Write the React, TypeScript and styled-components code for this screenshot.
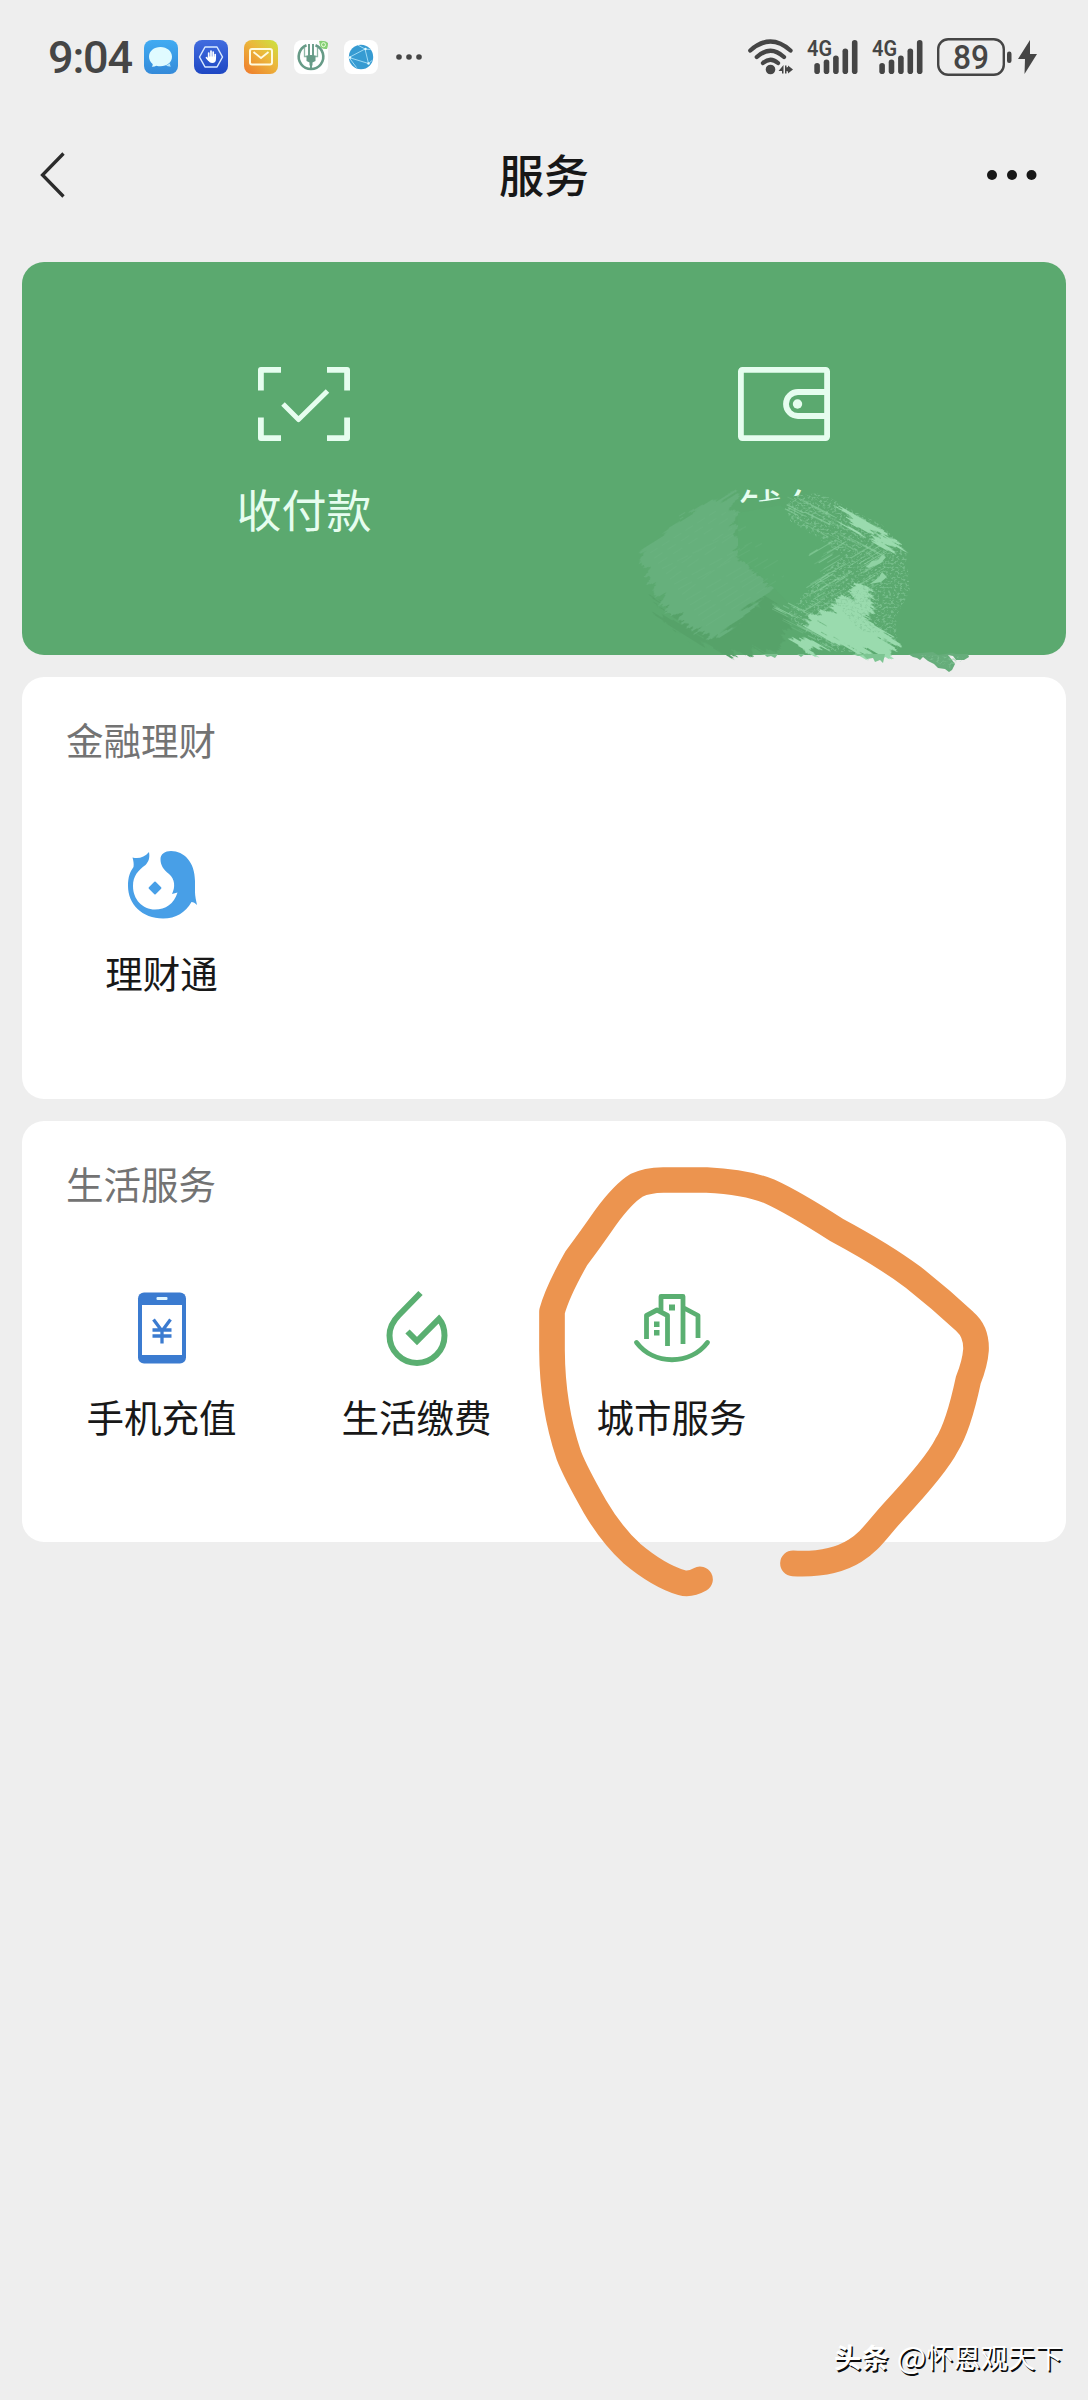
import React from 'react';
import styled, { createGlobalStyle } from 'styled-components';

const GlobalStyle = createGlobalStyle`
  * { box-sizing: border-box; }
  body {
    margin: 0;
    background: #eeeeee;
    font-family: "Noto Sans CJK SC", "Liberation Sans", sans-serif;
  }
  svg { display: block; overflow: visible; flex: none; }
`;

const Page = styled.main`
  position: relative;
  display: flex;
  flex-direction: column;
  width: 1088px;
  height: 2400px;
  overflow: hidden;
  background: #eeeeee;
`;

const StatusBar = styled.header`
  display: flex;
  align-items: center;
  justify-content: space-between;
  height: 114px;
  padding: 0 51px 0 48px;
`;

const StatusGroup = styled.div<{ $gap: number }>`
  display: flex;
  align-items: center;
  gap: ${(p) => p.$gap}px;
`;

const Clock = styled.time`
  width: 80px;
  padding-top: 2px;
  color: #454545;
  font: 500 45px/54px Roboto, sans-serif;
  letter-spacing: -1.2px;
  white-space: nowrap;
`;

const NavBar = styled.nav`
  display: grid;
  grid-template-columns: 120px 1fr 120px;
  align-items: center;
  height: 122px;
  padding: 0 40px;
`;

const NavTitle = styled.h1`
  margin: 0;
  padding-bottom: 3px;
  color: #171717;
  font-size: 45px;
  font-weight: 500;
  line-height: 60px;
  text-align: center;
`;

const NavAction = styled.button<{ $end?: boolean }>`
  display: flex;
  justify-content: ${(p) => (p.$end ? 'flex-end' : 'flex-start')};
  padding: 0;
  border: 0;
  background: none;
`;

const Content = styled.div`
  display: flex;
  flex-direction: column;
  gap: 22px;
  padding: 26px 22px 0;
`;

const PayCard = styled.section`
  position: relative;
  display: grid;
  grid-template-columns: 480px 480px;
  justify-content: center;
  height: 393px;
  padding-top: 105px;
  border-radius: 22px;
  background: #5ba96f;
`;

const PayItem = styled.div`
  display: flex;
  flex-direction: column;
  align-items: center;
  gap: 38px;
`;

const PayLabel = styled.span<{ $worn?: boolean }>`
  color: #e6fdef;
  font-size: 45px;
  line-height: 60px;
  clip-path: ${(p) => (p.$worn ? 'polygon(0 0, 100% 0, 92% 14px, 62% 17px, 50% 19px, 30% 22px, 0 24px)' : 'none')};
`;

const Smear = styled.svg`
  position: absolute;
  left: 598px;
  top: 229px;
  pointer-events: none;
`;

const Card = styled.section`
  height: 421.5px;
  padding: 35px 12px 0;
  border-radius: 22px;
  background: #ffffff;
`;

const CardTitle = styled.h2`
  margin: 0 0 0 32px;
  color: #737373;
  font-size: 37.5px;
  font-weight: 400;
  line-height: 54px;
`;

const ServiceGrid = styled.div`
  display: grid;
  grid-template-columns: repeat(4, 255px);
  margin-top: 80px;
`;

const Service = styled.div`
  display: flex;
  flex-direction: column;
  align-items: center;
  gap: 23px;
`;

const ServiceLabel = styled.span`
  color: #181818;
  font-size: 37.5px;
  line-height: 54px;
`;

const Marker = styled.svg`
  position: absolute;
  left: 530px;
  top: 1150px;
  pointer-events: none;
`;

const Watermark = styled.footer`
  display: flex;
  align-items: center;
  justify-content: flex-end;
  gap: 8px;
  margin-top: auto;
  height: 88px;
  padding: 0 25.5px 0 0;
  color: #ffffff;
  font-size: 27.3px;
  line-height: 40px;
  text-shadow: 1.5px 1.5px 0 #0c0c0c;
`;

const Brand = styled.b`
  font-weight: 700;
`;

const Author = styled.span`
  display: flex;
  align-items: center;
`;

const AtSign = styled.span`
  font-size: 31px;
`;

const INK = '#454545';

const MessageApp = () => (
  <svg width="34" height="34" viewBox="0 0 34 34">
    <defs>
      <linearGradient id="msg" x1="0" y1="0" x2="0" y2="1">
        <stop offset="0" stopColor="#41abf2" /><stop offset="1" stopColor="#348ad9" />
      </linearGradient>
    </defs>
    <rect width="34" height="34" rx="8" fill="url(#msg)" />
    <path d="M16.500 7C10 7 5 11 5 16.800c0 3 1.400 5.300 3.600 7.200.3 1.200-.2 2-.8 2.700 1.800.1 3.300-.3 4.600-1 1.300.4 2.700.5 4.100.5C23 26.200 28 22.300 28 16.800S23 7 16.500 7z" fill="#e0fbff" />
    <path d="M22 25.500c1.500 1 3.200 1.300 5 1-1-.9-1.100-2-.8-3.200" fill="#b7e4fa" />
  </svg>
);

const GuardApp = () => (
  <svg width="34" height="34" viewBox="0 0 34 34">
    <defs>
      <linearGradient id="guard" x1="0" y1="0" x2="0" y2="1">
        <stop offset="0" stopColor="#416cdf" /><stop offset="1" stopColor="#1e47c3" />
      </linearGradient>
    </defs>
    <rect width="34" height="34" rx="8" fill="url(#guard)" />
    <path d="M11 7h12l5.500 10L23 27H11L5.500 17z" fill="none" stroke="#d9eaff" strokeWidth="1.500" strokeLinejoin="round" />
    <path d="M14.700 18v-5M17 17v-6M19.200 17v-5M21.200 18v-3.500M14.500 20l-2-2.300" stroke="#fff" strokeWidth="1.700" strokeLinecap="round" />
    <path d="M13.800 16.500h8.200v2.500c0 2.500-1.300 4-3.700 4-2.300 0-3.200-.9-4.500-3.200z" fill="#fff" />
  </svg>
);

const MailApp = () => (
  <svg width="34" height="34" viewBox="0 0 34 34">
    <defs>
      <linearGradient id="mail" x1="1" y1="0" x2="0.100" y2="1">
        <stop offset="0" stopColor="#c9e53f" /><stop offset=".45" stopColor="#ebb83b" /><stop offset="1" stopColor="#ef7e2d" />
      </linearGradient>
    </defs>
    <rect width="34" height="34" rx="8" fill="url(#mail)" />
    <rect x="6" y="9" width="22" height="15.500" rx="2" fill="none" stroke="#fffbe0" strokeWidth="2" />
    <path d="M9.500 12l7.500 6 7.500-6" fill="none" stroke="#fffbe0" strokeWidth="1.800" />
  </svg>
);

const BankApp = () => (
  <svg width="34" height="34" viewBox="0 0 34 34">
    <rect width="34" height="34" rx="8" fill="#fff" />
    <path d="M12.500 5.300a12.300 12.300 0 1 0 9 0" fill="none" stroke="#679b87" strokeWidth="2.600" />
    <path d="M15 4v12M19 4v12M17 15v13" fill="none" stroke="#679b87" strokeWidth="1.900" />
    <path d="M10.500 8v8.500h3.500M23.500 8v8.500H20" fill="none" stroke="#8fb8a7" strokeWidth="1.300" />
    <path d="M12.500 15.500h9v5.500l-3 1.500v3h-3v-3l-3-1.500z" fill="#679b87" />
    <path d="M25 1c4-.5 7 0 9 2 0 3-.5 5-1 6-4 .5-7-1-7-3.500z" fill="#86cf75" />
    <circle cx="29.500" cy="4.700" r="2" fill="none" stroke="#eaffdc" />
  </svg>
);

const NetApp = () => (
  <svg width="34" height="34" viewBox="0 0 34 34">
    <rect width="34" height="34" rx="8" fill="#fff" />
    <circle cx="17" cy="17" r="12.200" fill="#369bd2" />
    <path d="M5 17.500L21 9l3.500 14.500zM14 5.200l7 3.800 5.500.5M24.500 23.500l3.500-3M5 17.500l7.500 10" fill="none" stroke="#a9e0f7" strokeWidth=".9" />
    <g fill="#e4fbff"><circle cx="21.500" cy="9" r="1.200" /><circle cx="24.500" cy="23.500" r="1.200" /><circle cx="6" cy="17.500" r="1.200" /></g>
  </svg>
);

const WifiIcon = () => (
  <svg width="45" height="36" viewBox="0 0 45 36" fill="none" stroke={INK} strokeWidth="4.300" strokeLinecap="round">
    <path d="M2.300 11.500Q22.500-6.500 42.500 11.500" />
    <path d="M8.800 18Q22.500 5.500 36 18" />
    <path d="M15 24Q22.500 17.500 30 24" />
    <circle cx="22.500" cy="30.500" r="4.800" fill={INK} stroke="none" />
    <path d="M30.500 32l5-6v8.500h-1.500V32zM37 26.500h1.500v2l1.500-.5v-1.500l5 4-5 4v-2l-1.500-.5v2.500H37z" fill={INK} stroke="none" />
  </svg>
);

const SignalIcon = () => (
  <svg width="51" height="36" viewBox="0 0 51 36">
    <text x="0" y="17.300" fill={INK} textLength="25" lengthAdjust="spacingAndGlyphs" fontFamily="Roboto" fontWeight="600" fontSize="22.500">4G</text>
    {[24, 20.5, 16.5, 9.5, 1].map((top, i) => (
      <rect key={top} x={7.3 + i * 9.4} y={top} width="5.600" height={35 - top} rx="2.800" fill={INK} />
    ))}
  </svg>
);

const Power = styled.div`
  display: flex;
  align-items: center;
  gap: 6px;
`;

const BatteryIcon = () => (
  <svg width="75" height="38" viewBox="0 0 75 38">
    <rect x="1.200" y="1.200" width="65.600" height="35.600" rx="10" fill="none" stroke={INK} strokeWidth="2.400" />
    <text x="34" y="31" textAnchor="middle" fill={INK} textLength="36" lengthAdjust="spacingAndGlyphs" fontFamily="Roboto" fontWeight="500" fontSize="33.500">89</text>
    <rect x="70" y="13.500" width="4.500" height="11.500" rx="2.200" fill={INK} />
  </svg>
);

const BoltIcon = () => (
  <svg width="19" height="36" viewBox="0 0 19 36">
    <path d="M12 1L0 20h7l-.5 15L19 15h-7z" fill={INK} />
  </svg>
);

const ScanIcon = () => (
  <svg width="92" height="74" viewBox="0 0 92 74" fill="none" stroke="#e6fdef" strokeWidth="5.800" strokeLinejoin="round">
    <path d="M2.900 23.500V2.900H23M69 2.900h20.100v20.600M89.100 50.500v20.600H69M23 71.100H2.900V50.500" />
    <path d="M25 37l15.500 15.500L69.500 24" strokeWidth="5" />
  </svg>
);

const WalletIcon = () => (
  <svg width="92" height="74" viewBox="0 0 92 74" fill="none" stroke="#e6fdef" strokeWidth="5.800">
    <rect x="2.900" y="2.900" width="86.200" height="68.200" rx="1.500" />
    <path d="M89 25H60a12 12 0 0 0 0 24h29" />
    <circle cx="59.500" cy="37" r="4.700" fill="#e6fdef" stroke="none" />
  </svg>
);

const DolphinIcon = () => (
  <svg width="70" height="72" viewBox="0 0 70 72" fill="#489fe7">
    <path d="M5.500 9.500c6 1.500 12 0 16.500-5.500 1 6-.3 9.500-3.500 13C11 22.500 6 28 6 38c0 13.500 9.500 23.500 22 23.500 10.500 0 19-5.500 22.500-17l-5.500 1.500c3.500-7 3-15-3-20-6-5-8.500-9-8.500-15C33.500 6 38 3 44 3c13 0 24 11 24 30v11c0 4 1 8 2 13-2-2-3.500-3-5.500-3C58.500 64.500 49 70.500 36 70.500 15 70.500 1 56 1 38c0-9 2-14 5.500-19 .5-3 0-6-1-9.500z" />
    <path d="M28 34.500l5.500 5.500-5.500 5.500-5.500-5.500z" stroke="#489fe7" strokeWidth="1.800" strokeLinejoin="round" />
  </svg>
);

const PhoneIcon = () => (
  <svg width="48" height="72" viewBox="0 0 48 72">
    <rect y=".5" width="48" height="71" rx="6" fill="#3b7bd0" />
    <rect x="4" y="13" width="40" height="50" fill="#fff" />
    <rect x="18.500" y="5" width="11" height="3" rx="1" fill="#e1f6ff" />
    <path d="M15.500 27.500L24 39l8.500-11.500M14.500 38h19M14.500 44h19M24 38v13.500" fill="none" stroke="#3b7bd0" strokeWidth="3.300" />
  </svg>
);

const DropIcon = () => (
  <svg width="62" height="76" viewBox="0 0 62 76" fill="none" stroke="#5aaf71" strokeWidth="6">
    <path d="M34.500 3L13 25C6 32 3.500 38 3.500 45.500a27.500 27.500 0 0 0 55 0c0-7-2-12.500-5.500-16.500L31 51 21.500 41.500" />
  </svg>
);

const CityIcon = () => (
  <svg width="76" height="72" viewBox="0 0 76 72" fill="none" stroke="#5aaf71" strokeWidth="4.800" strokeLinejoin="round">
    <path d="M12.500 47V23.500L23 18l10.500 5.500V54M27 19V4.500h22V52M49 15.500l15 8V46" />
    <path d="M2.500 50.500C20 73.500 56 73.500 73.500 50.500" strokeLinecap="round" />
    <g fill="#5aaf71" stroke="none">
      <rect x="35" y="12.500" width="6" height="6" /><rect x="20" y="29.500" width="5.500" height="5.500" /><rect x="20" y="38" width="5.500" height="5.500" />
    </g>
  </svg>
);

type Line = { d: string; w: number; o: number };

/* Short parallel scratches scattered inside a slanted band. */
function scratches(count: number, seed: number, x0: number, y0: number, w: number, h: number, slope: number, skew: number): Line[] {
  let s = seed;
  const rnd = () => {
    s = (s * 16807) % 2147483647;
    return s / 2147483647;
  };
  return Array.from({ length: count }, () => {
    const v = rnd();
    const x = x0 + rnd() * w + v * skew;
    const y = y0 + v * h;
    const len = 6 + rnd() * 20;
    return { d: `M${x.toFixed(1)} ${y.toFixed(1)}l${len.toFixed(1)} ${(len * slope).toFixed(1)}`, w: 0.5 + rnd() * 0.9, o: 0.2 + rnd() * 0.45 };
  });
}

const rightScratches = scratches(75, 71, 185, 62, 65, 66, -0.6, -5);
const topScratches = scratches(30, 19, 150, 6, 35, 50, 0.5, 60);
const lowScratches = scratches(34, 43, 145, 112, 35, 42, 0.5, 40);

/* Frays the edges of a shape along the direction of the brush. */
const Frayed = ({ angle, children }: { angle: number; children: React.ReactNode }) => (
  <g transform={`rotate(${angle} 185 85)`}>
    <g filter="url(#rough)">
      <g transform={`rotate(${-angle} 185 85)`}>{children}</g>
    </g>
  </g>
);

const PaintSmear = () => (
  <Smear width="370" height="200" viewBox="0 0 370 200">
    <defs>
      <filter id="rough" x="-15%" y="-15%" width="130%" height="130%" colorInterpolationFilters="sRGB">
        <feTurbulence type="fractalNoise" baseFrequency=".015 .2" numOctaves="3" seed="7" result="n" />
        <feDisplacementMap in="SourceGraphic" in2="n" scale="26" xChannelSelector="R" yChannelSelector="A" result="d" />
        <feOffset in="d" dx="0" dy="0" />
      </filter>
      <filter id="grain" x="0" y="0" width="100%" height="100%" colorInterpolationFilters="sRGB">
        <feTurbulence type="fractalNoise" baseFrequency=".35 .5" numOctaves="3" seed="12" />
        <feColorMatrix values="0 0 0 0 .53  0 0 0 0 .79  0 0 0 0 .61  5 0 0 0 -2.500" />
        <feComposite in2="SourceGraphic" operator="in" />
      </filter>
    </defs>
    <Frayed angle={32}>
      <path d="M30 104L70 128 150 108 170 130 158 161 100 161 55 136z" fill="#56a269" />
    </Frayed>
    <Frayed angle={-32}>
      <path d="M22 62L52 34 90 10 114 2 118 65 153 98 95 146 66 135 48 118 25 82z" fill="#66b07c" />
    </Frayed>
    <path d="M118 22L160 14 210 50 205 105 180 124 155 98 118 65z" fill="#5bab70" />
    <g stroke="#74b98a" strokeWidth="1.200" opacity=".22">
      {Array.from({ length: 15 }, (_, i) => (
        <path key={i} d={`M${30 + i * 4} ${62 + i * 5.2}l${66 + (i % 4) * 6} ${-42 - (i % 3) * 4}`} strokeDasharray={`${9 + i} ${5 + (i % 3)}`} />
      ))}
    </g>
    <path d="M166 14L178 4 201 2 230 18 262 34 286 60 290 100 276 125 278 161 210 161 165 124 200 85 225 64 170 30z" fill="#88c99b" filter="url(#grain)" opacity=".6" />
    <g stroke="#8fd2a3" fill="none">
      {[...rightScratches, ...topScratches, ...lowScratches].map((l) => (
        <path key={l.d} d={l.d} strokeWidth={l.w} opacity={l.o} />
      ))}
    </g>
    <Frayed angle={30}>
      <g fill="#9adbae">
        <path d="M184 133L222 108 245 94 256 108 247 125 262 143 278 154 262 170 222 156z" />
        <path d="M213 15L228 20 237 26 267 41 264 45 235 38 228 28z" />
        <path d="M252 43L275 52 285 62 255 52z" />
        <path d="M172 148L196 155 209 163 185 163z" />
      </g>
    </Frayed>
    <path d="M246 76L252 70 258 69 262 64 266 66 261 72 249 77zM250 93L259 86 262 81 267 86 261 91z" fill="#8fd2a3" />
    <path d="M215 112L245 94 256 108 247 125 262 143 240 140z" fill="#68b57f" filter="url(#grain)" opacity=".7" />
    <path d="M232 163l6 2 5-1 4 4 6-1 2 4 5-2 3 3 2-9z" fill="#7dc592" />
    <path d="M288 163l5 3 4 1 3 2 3-3 5 4 6 3 4 4 7 1 4 3 3-2 3-6-3-4-4-5 5 1 3 4 8 0 5-3-1-3-12 0-4-1-14 2-5-3z" fill="#66ad7b" />
    <path d="M140 163l5 1 2 2 4-1 4 2 3-4zM177 163l4 3 4-3z" fill="#7abf8e" />
    <path d="M300 164L346 166 331 178z" fill="#eee" filter="url(#grain)" opacity=".5" />
  </Smear>
);

const lifeServices = [
  { label: '手机充值', icon: <PhoneIcon /> },
  { label: '生活缴费', icon: <DropIcon /> },
  { label: '城市服务', icon: <CityIcon /> },
];

const IconSlot = styled.div`
  display: flex;
  align-items: center;
  justify-content: center;
  height: 76px;
`;

export default function App() {
  return (
    <Page>
      <GlobalStyle />
      <StatusBar>
        <StatusGroup $gap={16}>
          <Clock>9:04</Clock>
          <MessageApp />
          <GuardApp />
          <MailApp />
          <BankApp />
          <NetApp />
          <svg width="28" height="8" viewBox="0 0 28 8" fill={INK}>
            <circle cx="5" cy="4" r="2.800" /><circle cx="15" cy="4" r="2.800" /><circle cx="25" cy="4" r="2.800" />
          </svg>
        </StatusGroup>
        <StatusGroup $gap={14}>
          <WifiIcon />
          <SignalIcon />
          <SignalIcon />
          <Power>
            <BatteryIcon />
            <BoltIcon />
          </Power>
        </StatusGroup>
      </StatusBar>
      <NavBar>
        <NavAction aria-label="back">
          <svg width="25" height="46" viewBox="0 0 25 46">
            <path d="M23.500 1.500L2.500 23l21 21.500" fill="none" stroke="#2b2b2b" strokeWidth="3.300" />
          </svg>
        </NavAction>
        <NavTitle>服务</NavTitle>
        <NavAction $end aria-label="more">
          <svg width="62" height="12" viewBox="0 0 62 12" fill="#171717">
            <circle cx="6" cy="6" r="5" /><circle cx="26" cy="6" r="5" /><circle cx="45.500" cy="6" r="5" />
          </svg>
        </NavAction>
      </NavBar>
      <Content>
        <PayCard>
          <PayItem>
            <ScanIcon />
            <PayLabel>收付款</PayLabel>
          </PayItem>
          <PayItem>
            <WalletIcon />
            <PayLabel $worn>钱包</PayLabel>
          </PayItem>
          <PaintSmear />
        </PayCard>
        <Card>
          <CardTitle>金融理财</CardTitle>
          <ServiceGrid>
            <Service>
              <IconSlot><DolphinIcon /></IconSlot>
              <ServiceLabel>理财通</ServiceLabel>
            </Service>
          </ServiceGrid>
        </Card>
        <Card>
          <CardTitle>生活服务</CardTitle>
          <ServiceGrid>
            {lifeServices.map((s) => (
              <Service key={s.label}>
                <IconSlot>{s.icon}</IconSlot>
                <ServiceLabel>{s.label}</ServiceLabel>
              </Service>
            ))}
          </ServiceGrid>
        </Card>
      </Content>
      <Marker width="480" height="460" viewBox="0 0 1440 1380">
        <path
          d="M510 1288Q480 1305 455 1298Q385 1277 305 1210Q245 1155 195 1070Q135 965 116 915Q67 770 66 600V485Q82 425 140 323Q180 270 225 205Q280 130 320 106Q350 91 400 90H530Q650 96 720 125Q790 157 920 240Q1060 315 1150 382Q1230 445 1305 515Q1340 545 1338 600Q1335 640 1315 690Q1285 830 1250 885C1225 935 1160 1010 1090 1085C1040 1140 1020 1175 975 1202Q905 1246 789 1240"
          fill="none" stroke="#ec944f" strokeWidth="77" strokeLinecap="round" strokeLinejoin="round"
        />
      </Marker>
      <Watermark>
        <Brand>头条</Brand>
        <Author><AtSign>@</AtSign>怀恩观天下</Author>
      </Watermark>
    </Page>
  );
}
